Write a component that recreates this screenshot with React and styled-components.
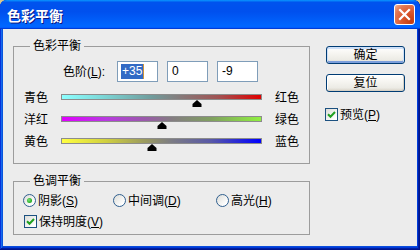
import React from "react";
import styled, { createGlobalStyle } from "styled-components";

const UI_FONT = `"Liberation Sans", "Noto Sans CJK SC", sans-serif`;

const GlobalStyle = createGlobalStyle`
  html, body { margin: 0; padding: 0; width: 420px; height: 250px; overflow: hidden; background: #d9c68c; }
  #root { width: 420px; height: 250px; }
  * { box-sizing: border-box; }
`;

const Window = styled.div`
  width: 420px;
  height: 250px;
  display: flex;
  flex-direction: column;
  background: #0a4cdc;
  border-radius: 7px 7px 0 0;
  overflow: hidden;
  box-shadow: inset -1px -1px #00138c, inset 1px 1px #0831d9, inset -2px -2px #001ea0,
    inset 2px 2px #166aee, inset -3px -3px #003bda, inset 3px 3px #0855dd;
  font-family: ${UI_FONT};
  font-size: 12px;
  color: #000;
`;

const TitleBar = styled.div`
  height: 29px;
  flex: none;
  display: flex;
  align-items: center;
  justify-content: space-between;
  padding: 0 5px 0 7px;
  background: linear-gradient(180deg, #0997ff, #0053ee 8%, #0050ee 40%, #0066ff 88%, #0066ff 93%, #005bff 95%, #003dd7 96%, #003dd7);
`;

const TitleText = styled.span`
  font-family: "Noto Sans CJK SC", sans-serif;
  font-weight: 700;
  font-size: 14px;
  line-height: 16px;
  color: #fff;
  text-shadow: 1px 1px #0a1883;
  letter-spacing: 0;
`;

const CloseButton = styled.button`
  width: 21px;
  height: 21px;
  padding: 0;
  border: 1px solid #fff;
  border-radius: 3px;
  display: flex;
  align-items: center;
  justify-content: center;
  background: radial-gradient(circle at 85% 85%, #c43c10 0%, #dc5a30 45%, #e37a55 75%, #f2b59a 100%);
`;

const Body = styled.div`
  flex: 1;
  margin: 0 3px 4px;
  background: #ececec;
  display: flex;
  align-items: flex-start;
  gap: 16px;
  padding: 11px 0 0 10px;
`;

const LeftColumn = styled.div`
  width: 297px;
  display: flex;
  flex-direction: column;
`;

const GroupBox = styled.fieldset`
  margin: ${(p) => p.$top}px 0 0;
  padding: 0 0 ${(p) => p.$padBottom}px;
  border: 1px solid #9c9c9c;
  width: 297px;
  min-width: 0;
`;

const Legend = styled.legend`
  margin-left: 16px;
  padding: 0 3px;
  height: 13px;
  line-height: 13px;
  font-size: 12px;
`;

const LevelRow = styled.div`
  margin-top: 8px;
  height: 21px;
  display: flex;
  align-items: center;
  padding-left: 49px;
`;

const LevelLabel = styled.span`
  width: 54px;
  line-height: 14px;
  padding-top: 1px;
`;

const NumBoxes = styled.div`
  display: flex;
  gap: 9px;
`;

const NumBox = styled.div`
  width: 41px;
  height: 21px;
  border: 1px solid #7f9db9;
  background: #fff;
  padding-left: 4px;
  display: flex;
  align-items: center;
  font-size: 12px;
  line-height: 15px;
`;

const Selected = styled.span`
  margin-left: -1px;
  padding: 0 1px;
  height: 15px;
  background: #316ac5;
  color: #fff;
`;

const Caret = styled.span`
  width: 1px;
  height: 15px;
  background: #ce9538;
`;

const SliderList = styled.div`
  margin-top: 4px;
  display: flex;
  flex-direction: column;
`;

const SliderRow = styled.div`
  display: grid;
  grid-template-columns: 24px 201px auto;
  column-gap: 13px;
  align-items: center;
  height: 22px;
  padding-left: 10px;
`;

const ColorName = styled.span`
  line-height: 14px;
  padding-top: 2px;
  white-space: nowrap;
`;

const TrackWrap = styled.div`
  position: relative;
  height: 6px;
`;

const Track = styled.div`
  height: 6px;
  border: 1px solid #8c8c8c;
  background: ${(p) => p.$gradient};
`;

const Thumb = styled.svg`
  position: absolute;
  top: 6px;
  width: 10px;
  height: 7px;
  display: block;
`;

const RadioRow = styled.div`
  margin-top: 4px;
  height: 16px;
  display: grid;
  grid-template-columns: 90px 103px auto;
  align-items: center;
  padding-left: 9px;
`;

const CheckRow = styled.div`
  margin-top: ${(p) => p.$top || 0}px;
  height: ${(p) => p.$height || 16}px;
  display: flex;
  align-items: center;
  padding-left: ${(p) => p.$left || 0}px;
`;

const Option = styled.span`
  display: inline-flex;
  align-items: center;
  gap: 2px;
  white-space: nowrap;
`;

const OptionText = styled.span`
  line-height: 14px;
  padding-top: 1px;
`;

const RadioCircle = styled.span`
  width: 13px;
  height: 13px;
  border-radius: 50%;
  border: 1px solid #2f5f8f;
  background: linear-gradient(135deg, #dcdcd7 0%, #ffffff 80%);
  display: flex;
  align-items: center;
  justify-content: center;
  flex: none;
`;

const RadioDot = styled.span`
  width: 5px;
  height: 5px;
  border-radius: 50%;
  background: radial-gradient(circle at 40% 40%, #7ee07a 0%, #2ab42a 60%, #148c14 100%);
`;

const CheckBox = styled.span`
  width: 13px;
  height: 13px;
  border: 1px solid #1c5180;
  background: linear-gradient(135deg, #dcdcd7 0%, #ffffff 85%);
  display: flex;
  align-items: center;
  justify-content: center;
  flex: none;
`;

const Key = styled.span`
  text-decoration: underline;
  text-underline-offset: 1px;
`;

const RightColumn = styled.div`
  width: 79px;
  padding-top: 6px;
  display: flex;
  flex-direction: column;
  gap: 10px;
`;

const PushButton = styled.button`
  width: 79px;
  height: 18px;
  padding: 0;
  border: 1px solid #003c74;
  border-radius: 3px;
  font-family: ${UI_FONT};
  font-size: 12px;
  line-height: 14px;
  color: #000;
  background: linear-gradient(180deg, #ffffff 0%, #f6f5f1 40%, #ecebe5 80%, #d8d2c6 100%);
  box-shadow: ${(p) =>
    p.$isDefault
      ? "inset 0 1px 0 1px #cee0f8, inset 0 -1px 0 1px #7c9fdc"
      : "inset -1px -1px 0 #d6d0c5, inset 1px 1px 0 #ffffff"};
`;

const PreviewRow = styled.div`
  margin-top: 5px;
  margin-left: -1px;
  height: 14px;
  display: flex;
  align-items: center;
`;

const sliders = [
  {
    left: "青色",
    right: "红色",
    value: 35,
    gradient:
      "linear-gradient(90deg, #8cffff 0%, #7cd8d8 20%, #709c9c 45%, #8a7474 62%, #a05454 78%, #e00000 100%)",
  },
  {
    left: "洋红",
    right: "绿色",
    value: 0,
    gradient:
      "linear-gradient(90deg, #e000ff 0%, #b83ae0 22%, #9a5aaa 42%, #847c82 55%, #80a060 75%, #90f040 100%)",
  },
  {
    left: "黄色",
    right: "蓝色",
    value: -9,
    gradient:
      "linear-gradient(90deg, #ffff40 0%, #d0d040 22%, #9a9a60 42%, #7c7c84 55%, #5858a8 75%, #0000ff 100%)",
  },
];

function ThumbShape({ value }) {
  const left = 100.5 + value * 1.005 - 5;
  return (
    <Thumb viewBox="0 0 10 7" style={{ left: `${left}px` }}>
      <path d="M5 0 L9.5 4 V7 H0.5 V4 Z" fill="#000" />
    </Thumb>
  );
}

function Check() {
  return (
    <svg width="9" height="9" viewBox="0 0 9 9">
      <path d="M1 4.2 L3.5 6.7 L8 2" fill="none" stroke="#21a121" strokeWidth="2" />
    </svg>
  );
}

export default function App() {
  return (
    <>
      <GlobalStyle />
      <Window>
        <TitleBar>
          <TitleText>色彩平衡</TitleText>
          <CloseButton aria-label="关闭">
            <svg width="13" height="13" viewBox="0 0 13 13">
              <path d="M2 2 L11 11 M11 2 L2 11" stroke="#fff" strokeWidth="2.2" strokeLinecap="square" />
            </svg>
          </CloseButton>
        </TitleBar>
        <Body>
          <LeftColumn>
            <GroupBox $top={0} $padBottom={11}>
              <Legend>色彩平衡</Legend>
              <LevelRow>
                <LevelLabel>
                  色阶(<Key>L</Key>):
                </LevelLabel>
                <NumBoxes>
                  <NumBox>
                    <Selected>+35</Selected>
                    <Caret />
                  </NumBox>
                  <NumBox>0</NumBox>
                  <NumBox>-9</NumBox>
                </NumBoxes>
              </LevelRow>
              <SliderList>
                {sliders.map((s) => (
                  <SliderRow key={s.left}>
                    <ColorName>{s.left}</ColorName>
                    <TrackWrap>
                      <Track $gradient={s.gradient} />
                      <ThumbShape value={s.value} />
                    </TrackWrap>
                    <ColorName>{s.right}</ColorName>
                  </SliderRow>
                ))}
              </SliderList>
            </GroupBox>
            <GroupBox $top={11} $padBottom={5}>
              <Legend>色调平衡</Legend>
              <RadioRow>
                <Option>
                  <RadioCircle>
                    <RadioDot />
                  </RadioCircle>
                  <OptionText>
                    阴影(<Key>S</Key>)
                  </OptionText>
                </Option>
                <Option>
                  <RadioCircle />
                  <OptionText>
                    中间调(<Key>D</Key>)
                  </OptionText>
                </Option>
                <Option>
                  <RadioCircle />
                  <OptionText>
                    高光(<Key>H</Key>)
                  </OptionText>
                </Option>
              </RadioRow>
              <CheckRow $top={5} $left={10}>
                <Option>
                  <CheckBox>
                    <Check />
                  </CheckBox>
                  <OptionText>
                    保持明度(<Key>V</Key>)
                  </OptionText>
                </Option>
              </CheckRow>
            </GroupBox>
          </LeftColumn>
          <RightColumn>
            <PushButton $isDefault>确定</PushButton>
            <PushButton>复位</PushButton>
            <PreviewRow>
              <Option>
                <CheckBox>
                  <Check />
                </CheckBox>
                <OptionText>
                  预览(<Key>P</Key>)
                </OptionText>
              </Option>
            </PreviewRow>
          </RightColumn>
        </Body>
      </Window>
    </>
  );
}
